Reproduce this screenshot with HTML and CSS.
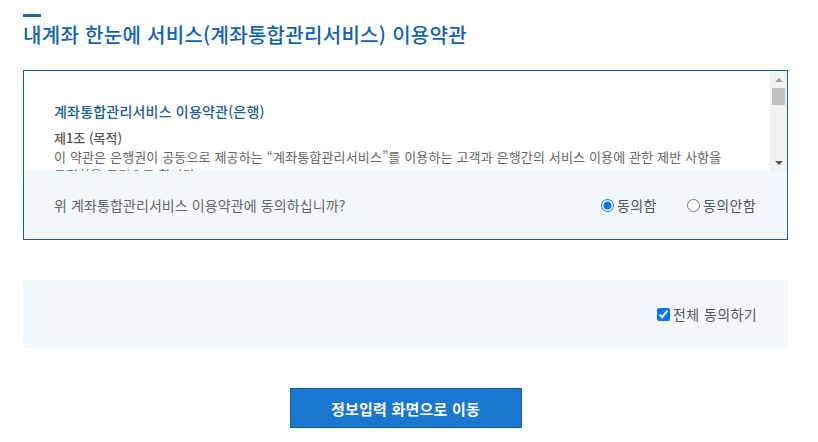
FILE: index.html
```html
<!DOCTYPE html>
<html lang="ko">
<head>
<meta charset="utf-8">
<link rel="stylesheet" href="styles.css">
</head>
<body>
<div class="page">
  <div class="title-mark"></div>
  <h1 class="title">내계좌 한눈에 서비스(계좌통합관리서비스) 이용약관</h1>

  <div class="terms-box">
    <div class="terms-scroll">
      <div class="terms-content">
        <h2 class="terms-heading">계좌통합관리서비스 이용약관(은행)</h2>
        <h3 class="article">제1조 (목적)</h3>
        <p class="article-body">이 약관은 은행권이 공동으로 제공하는 “계좌통합관리서비스”를 이용하는 고객과 은행간의 서비스 이용에 관한 제반 사항을 규정함을 목적으로 합니다.</p>
        <h3 class="article">제2조 (정의)</h3>
        <p class="article-body">이 약관에서 사용하는 용어의 정의는 다음과 같습니다.</p>
      </div>
      <div class="scrollbar" aria-hidden="true">
        <span class="sb-up"></span>
        <span class="sb-thumb"></span>
        <span class="sb-fill"></span>
        <span class="sb-down"></span>
      </div>
    </div>
    <div class="agree-row">
      <span class="agree-question">위 계좌통합관리서비스 이용약관에 동의하십니까?</span>
      <div class="radios">
        <label class="opt"><input type="radio" name="agree" checked><span>동의함</span></label>
        <label class="opt"><input type="radio" name="agree"><span>동의안함</span></label>
      </div>
    </div>
  </div>

  <div class="all-agree">
    <label class="opt"><input type="checkbox" checked><span>전체 동의하기</span></label>
  </div>

  <div class="actions">
    <button class="primary-btn" type="button">정보입력 화면으로 이동</button>
  </div>
</div>
</body>
</html>
```

FILE: styles.css
```css
* { box-sizing: border-box; }
html, body { margin: 0; padding: 0; background: #fff; }
body {
  font-family: "Noto Sans CJK KR", "Noto Sans", sans-serif;
  color: #555;
  font-size: 13px;
  word-break: keep-all;
}
.page {
  width: 818px;
  padding: 14px 30px 0 23px;
}
.title-mark {
  width: 18px;
  height: 3px;
  background: #1466b8;
}
.title {
  margin: 3px 0 0;
  font-size: 20px;
  line-height: 30px;
  font-weight: 500;
  color: #1063b4;
  letter-spacing: 0.3px;
}
.terms-box {
  margin-top: 20px;
  border: 1px solid #1b5e9e;
}
.terms-scroll {
  height: 100px;
  display: flex;
  background: #fff;
}
.terms-content {
  flex: 1;
  overflow: hidden;
  padding: 30px 20px 0 30px;
}
.terms-heading {
  margin: 0 0 7px;
  font-size: 14px;
  line-height: 20px;
  font-weight: 500;
  color: #1d5d99;
  letter-spacing: 0.2px;
}
.article {
  margin: 0;
  font-size: 13px;
  line-height: 20px;
  font-weight: 500;
  color: #555;
}
.article-body {
  margin: 0 0 10px;
  font-size: 13px;
  line-height: 18px;
  color: #666;
  letter-spacing: 0.15px;
}
.scrollbar {
  width: 17px;
  flex: none;
  background: #f1f1f1;
  display: flex;
  flex-direction: column;
  align-items: center;
}
.sb-up, .sb-down {
  height: 17px;
  width: 17px;
  display: flex;
  align-items: center;
  justify-content: center;
  flex: none;
}
.sb-up::before {
  content: "";
  border-left: 4px solid transparent;
  border-right: 4px solid transparent;
  border-bottom: 4px solid #a3a3a3;
}
.sb-down::before {
  content: "";
  border-left: 4px solid transparent;
  border-right: 4px solid transparent;
  border-top: 4px solid #505050;
}
.sb-thumb {
  width: 13px;
  height: 17px;
  background: #c1c1c1;
  flex: none;
}
.sb-fill { flex: 1; }
.agree-row {
  height: 68px;
  background: #f2f8fc;
  display: flex;
  align-items: center;
  justify-content: space-between;
  padding: 0 31px 0 30px;
}
.agree-question {
  color: #666;
  font-size: 14px;
  letter-spacing: 0.1px;
}
.radios { display: flex; gap: 30px; }
.opt {
  display: inline-flex;
  align-items: center;
  color: #555;
  font-size: 14px;
  letter-spacing: 0.4px;
}
.opt input {
  margin: 0 3px 0 0;
  width: 13px;
  height: 13px;
}
.all-agree {
  margin-top: 40px;
  height: 68px;
  background: #f2f8fc;
  display: flex;
  align-items: center;
  justify-content: flex-end;
  padding: 0 31px;
}
.actions {
  display: flex;
  justify-content: center;
  margin-top: 40px;
}
.primary-btn {
  width: 232px;
  height: 40px;
  background: #1a77cf;
  border: 1px solid #0f5ea6;
  color: #fff;
  font-family: "Noto Sans CJK KR", "Noto Sans", sans-serif;
  font-size: 15px;
  font-weight: 700;
  letter-spacing: 0.2px;
}
```
